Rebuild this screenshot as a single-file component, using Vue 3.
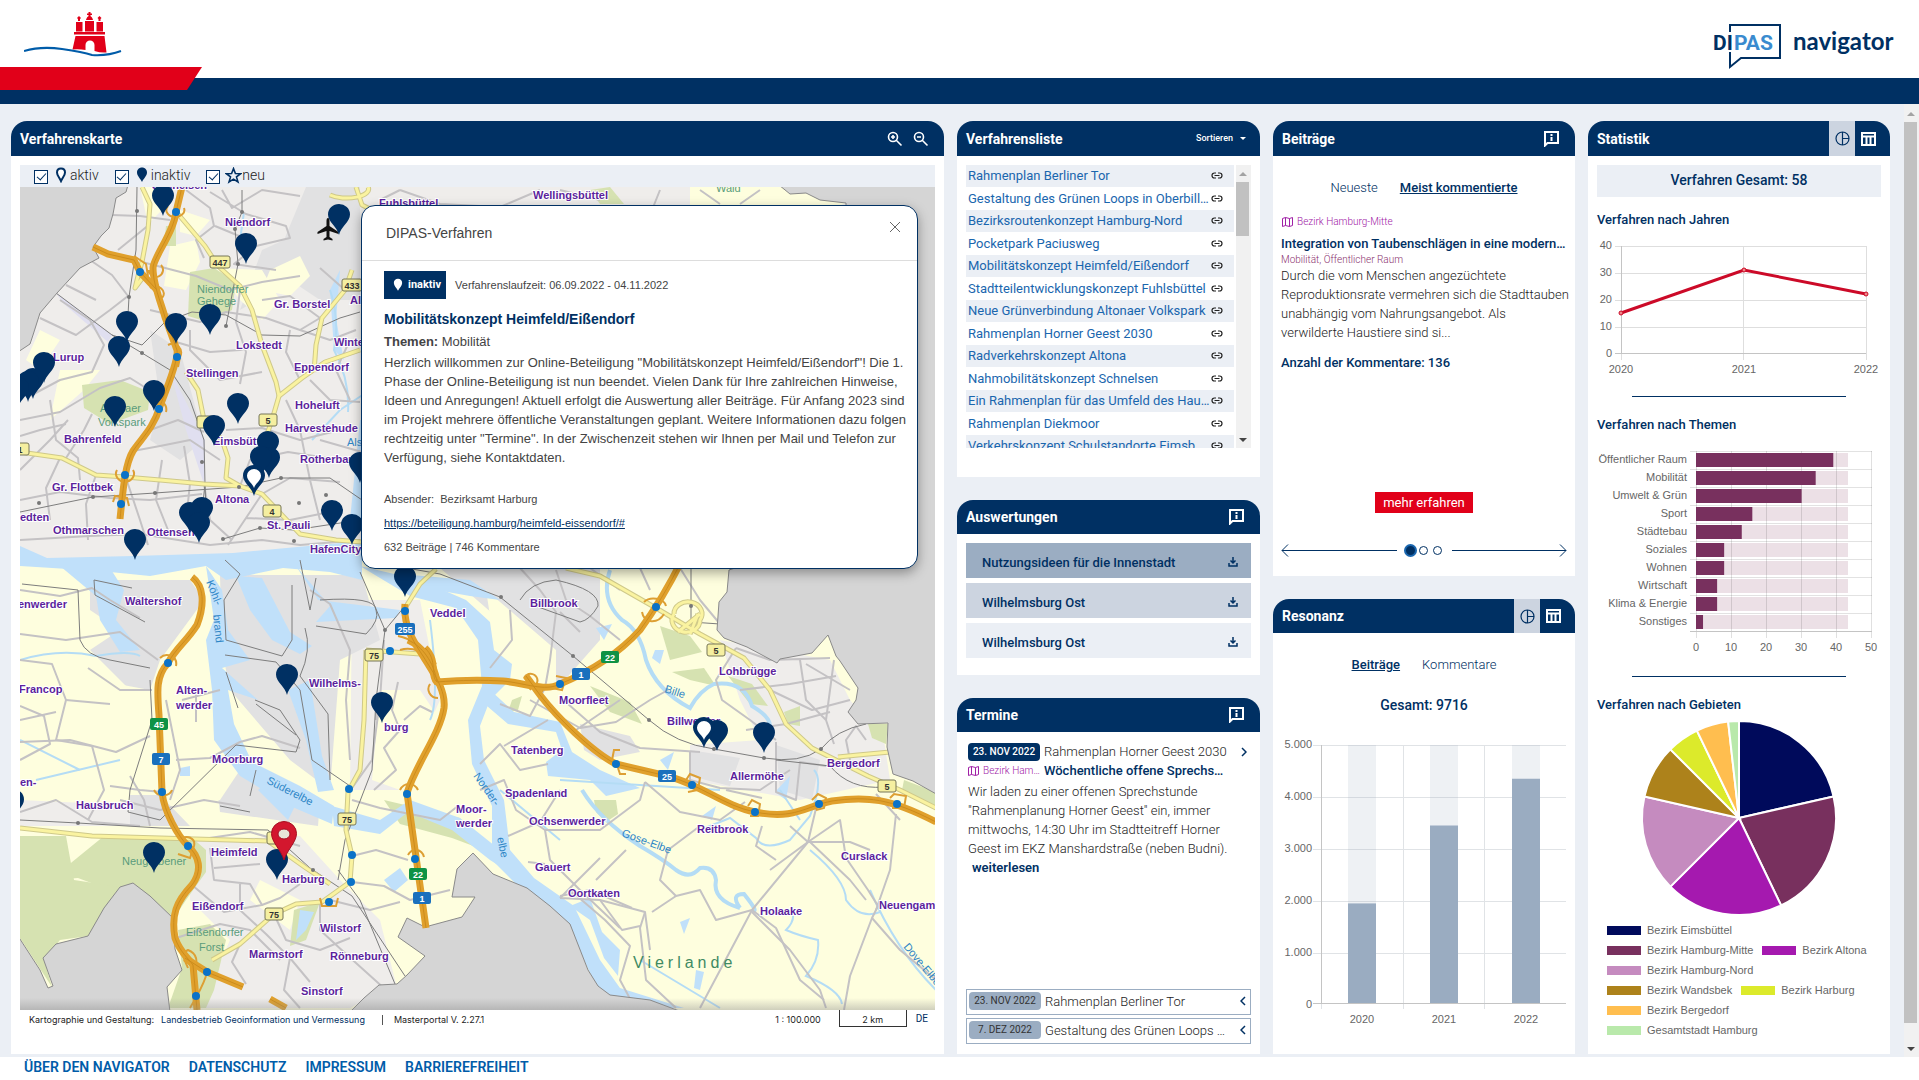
<script setup>
import { ref, computed } from 'vue'

const filters = ref({ aktiv: true, inaktiv: true, neu: true })

const procedures = [
  'Rahmenplan Berliner Tor',
  'Gestaltung des Grünen Loops in Oberbillwerder',
  'Bezirksroutenkonzept Hamburg-Nord',
  'Pocketpark Paciusweg',
  'Mobilitätskonzept Heimfeld/Eißendorf',
  'Stadtteilentwicklungskonzept Fuhlsbüttel',
  'Neue Grünverbindung Altonaer Volkspark',
  'Rahmenplan Horner Geest 2030',
  'Radverkehrskonzept Altona',
  'Nahmobilitätskonzept Schnelsen',
  'Ein Rahmenplan für das Umfeld des Hauptbahnhofs',
  'Rahmenplan Diekmoor',
  'Verkehrskonzept Schulstandorte Eimsbüttel',
]

const reports = ['Nutzungsideen für die Innenstadt', 'Wilhelmsburg Ost', 'Wilhelmsburg Ost']

const upcoming = [
  { date: '23. NOV 2022', title: 'Rahmenplan Berliner Tor' },
  { date: '7. DEZ 2022', title: 'Gestaltung des Grünen Loops in Oberbillwerder' },
]

const footerLinks = ['Über den Navigator', 'Datenschutz', 'Impressum', 'Barrierefreiheit']

const resonance = [
  { year: '2020', value: 1930 },
  { year: '2021', value: 3440 },
  { year: '2022', value: 4346 },
]
const resonanceTicks = ['5.000', '4.000', '3.000', '2.000', '1.000', '0']

const topics = [
  ['Öffentlicher Raum', 39], ['Mobilität', 34], ['Umwelt & Grün', 30], ['Sport', 16], ['Städtebau', 13],
  ['Soziales', 8], ['Wohnen', 8], ['Wirtschaft', 6], ['Klima & Energie', 6], ['Sonstiges', 2],
]

const districts = [
  { name: 'Bezirk Eimsbüttel', value: 12, color: '#000a5b' },
  { name: 'Bezirk Hamburg-Mitte', value: 12, color: '#78305e' },
  { name: 'Bezirk Altona', value: 11, color: '#a519af' },
  { name: 'Bezirk Hamburg-Nord', value: 9, color: '#c58bbf' },
  { name: 'Bezirk Wandsbek', value: 5, color: '#ad821b' },
  { name: 'Bezirk Harburg', value: 3, color: '#dcea2b' },
  { name: 'Bezirk Bergedorf', value: 3, color: '#ffbe4f' },
  { name: 'Gesamtstadt Hamburg', value: 1, color: '#b9e9ab' },
]
const slices = computed(() => {
  const total = districts.reduce((s, d) => s + d.value, 0)
  const r = 97
  let at = 0
  return districts.map((d) => {
    const a = (at / total) * 2 * Math.PI
    at += d.value
    const b = (at / total) * 2 * Math.PI
    const p = (t) => `${(r * Math.sin(t)).toFixed(2)} ${(-r * Math.cos(t)).toFixed(2)}`
    return { color: d.color, d: `M0 0L${p(a)}A${r} ${r} 0 0 1 ${p(b)}Z` }
  })
})

/* Map geometry */
const places = [
  ['Schnelsen', 152, 189], ['Wellingsbüttel', 533, 199], ['Fuhlsbüttel', 379, 207], ['Niendorf', 225, 226],
  ['Gr. Borstel', 274, 308], ['Lokstedt', 236, 349], ['Lurup', 53, 361], ['Winterhude', 334, 346], ['Alsterdorf', 350, 304],
  ['Stellingen', 186, 377], ['Eppendorf', 294, 371], ['Hoheluft', 295, 409], ['Harvestehude', 285, 432],
  ['Eimsbüttel', 213, 445], ['Rotherbaum', 300, 463], ['Bahrenfeld', 64, 443], ['Gr. Flottbek', 52, 491],
  ['Altona', 215, 503], ['St. Pauli', 267, 529], ['HafenCity', 310, 553], ['Othmarschen', 53, 534], ['Ottensen', 147, 536],
  ['edten', 20, 521], ['Waltershof', 125, 605], ['enwerder', 18, 608], ['Veddel', 430, 617], ['Francop', 19, 693],
  ['Alten-', 176, 694], ['werder', 176, 709], ['Wilhelms-', 309, 687], ['burg', 384, 731], ['Moorburg', 212, 763],
  ['en-', 20, 786], ['Hausbruch', 76, 809], ['Heimfeld', 211, 856], ['Harburg', 282, 883], ['Eißendorf', 192, 910],
  ['Wilstorf', 320, 932], ['Marmstorf', 249, 958], ['Rönneburg', 330, 960], ['Sinstorf', 301, 995],
  ['Billbrook', 530, 607], ['Moorfleet', 559, 704], ['Lohbrügge', 719, 675], ['Billwerder', 667, 725],
  ['Tatenberg', 511, 754], ['Allermöhe', 730, 780], ['Bergedorf', 827, 767], ['Spadenland', 505, 797],
  ['Ochsenwerder', 529, 825], ['Reitbrook', 697, 833], ['Curslack', 841, 860], ['Moor-', 456, 813], ['werder', 456, 827],
  ['Gauert', 535, 871], ['Oortkaten', 568, 897], ['Holaake', 760, 915], ['Neuengamme', 879, 909],
]
const woods = [
  ['Niendorfer', 197, 293], ['Gehege', 197, 305], ['Altonaer', 100, 412], ['Volkspark', 98, 426],
  ['Neugrabener', 122, 865], ['Eißendorfer', 186, 936], ['Forst', 199, 951], ['Wald', 716, 192],
]
const rivers = [
  ['Köhl-', 206, 582, 68], ['brand', 213, 615, 84], ['Süderelbe', 266, 783, 27], ['Norder-', 473, 776, 55],
  ['elbe', 497, 838, 78], ['Gose-Elbe', 621, 836, 20], ['Bille', 664, 692, 18], ['Dove-Elbe', 903, 947, 50], ['Alster', 347, 446, 0],
]
const shields = [
  ['447', 220, 262, 'y'], ['433', 352, 285, 'y'], ['', 206, 422, 'y'], ['5', 268, 420, 'y'], ['4', 272, 511, 'y'],
  ['75', 374, 655, 'y'], ['75', 347, 819, 'y'], ['75', 274, 914, 'y'], ['1', 20, 449, 'y'], ['', 276, 838, 'y'],
  ['5', 716, 650, 'y'], ['5', 887, 786, 'y'], ['255', 405, 629, 'b'], ['7', 161, 759, 'b'], ['1', 422, 898, 'b'],
  ['1', 581, 674, 'b'], ['25', 667, 776, 'b'], ['45', 159, 724, 'g'], ['22', 418, 874, 'g'], ['22', 610, 657, 'g'],
]
const pins = [
  [163, 214], [246, 262], [339, 233], [210, 333], [127, 340], [176, 342], [119, 365], [44, 381], [33, 397], [28, 400], [18, 406],
  [154, 409], [115, 425], [238, 422], [214, 444], [268, 460], [269, 476], [261, 475], [202, 526], [190, 531], [199, 541],
  [135, 558], [332, 529], [352, 543], [360, 481], [405, 595], [287, 693], [382, 721], [13, 818], [154, 871], [277, 878],
  [717, 749], [764, 751],
]
const openPins = [[254, 494], [704, 746]]
const junctions = [
  [176, 212], [140, 272], [177, 357], [159, 409], [125, 475], [121, 504], [168, 663], [162, 792], [188, 846], [207, 972],
  [196, 996], [405, 611], [390, 651], [349, 789], [352, 855], [351, 882], [329, 902], [407, 794], [415, 859],
  [560, 684], [656, 607], [616, 764], [692, 785], [755, 812], [819, 804], [897, 804],
]
const stations = [
  [137, 211], [242, 212], [235, 229], [238, 264], [129, 297], [226, 326], [142, 353], [202, 462], [239, 487], [281, 478],
  [155, 493], [39, 503], [93, 497], [299, 503], [326, 495], [294, 541], [260, 528], [223, 539], [500, 207], [385, 630],
  [573, 656], [649, 720], [714, 749], [764, 758], [821, 749], [313, 870], [691, 606], [501, 597], [78, 823],
]
const motorways = [
  'M182 187L176 212C174 232 153 258 153 268C153 284 160 300 165 317L177 350C179 360 163 398 160 406C154 428 140 440 133 451C125 464 123 490 120 519',
  'M93 247L108 254L134 260L140 272L157 290',
  'M192 577C204 586 205 604 197 625C186 642 176 648 168 663C156 676 157 690 159 715L162 792C164 812 178 836 188 846C199 856 203 870 192 885C176 902 171 915 175 938C180 952 188 958 193 965L197 1010',
  'M185 958L207 972L243 987M270 999L286 1008',
  'M405 604C403 628 416 645 423 656C434 674 446 690 444 708C440 734 416 764 407 793L426 928',
  'M408 640C422 646 434 662 437 682C460 680 485 680 503 681C525 683 545 692 560 684C594 670 620 652 640 630C656 608 668 588 682 560',
  'M425 648C438 660 430 676 437 682M526 676L540 695C556 716 592 752 616 764L667 776C700 784 724 806 755 812C795 820 806 806 832 801C866 796 890 798 936 822',
]
const ramps = [
  'M168 206a9 7 0 1 0 16 2M134 256l12 8 2 12M149 270a7 7 0 1 0 12-5M150 288c8-6 18 4 12 10M168 345c8-4 16 4 12 12l-2 10M152 400c8-2 16 4 14 12',
  'M117 470a9 8 0 1 0 16 0M113 502l2-6 12 2 2 8M160 658c6-6 18-2 16 8M154 790c4 8 16 6 18 0M180 840c6-6 16-2 14 6l-4 12-12-4',
  'M398 636c12 2 30 14 30 24M400 650c12-4 26 2 36 14M430 684c-4 6 0 14 8 14M400 790c4-8 14-8 18 0M408 855c4-8 14-6 16 2M320 898l2 8 14 0 2-8',
  'M524 678a7 7 0 1 1 11 8M530 690c4-8 14-6 12 2M556 676l10 2-4 12-10-2M644 602c6-6 20-4 22 4M642 612c2 12 16 12 22 2M612 760l2-10 6 0M618 768l2 6 6 0',
  'M686 780l4-6 10 4-2 12-10 2M748 806l4-6 8 4-2 12-8 0M812 800l6-6 8 4-2 10-8 2M890 798l4-4 12 2-2 12-12 0',
  'M188 968c-4-10-8-14 0-18 10 4 10 12 6 22M190 1008c6-10 12-20 16-32',
]
const yellowRoads = [
  'M142 187L150 204 148 230 142 262 138 276 135 288 144 276',
  'M178 214L205 246 218 266 240 286 252 310 262 345 276 382 279 396 302 378 325 362 360 350',
  'M279 396L272 420 265 440M186 372L198 390 204 420 222 440 228 458 226 478 240 486',
  'M20 452L62 458 96 475 125 477 160 480 204 484 240 486 262 494 300 534 336 540 362 542',
  'M352 270L345 290 322 318 316 345 314 372M330 195a22 9 0 0 0 38-8M356 187L362 205 378 213',
  'M436 569L420 584 405 608M366 650L420 654M366 650L364 720 360 770 348 792 346 830 352 856 350 882 322 902 296 904 274 914 240 944 212 960',
  'M20 828L92 836 160 838 268 841 306 868 330 884',
  'M566 568L600 576 656 608 700 634 744 658 770 690 786 724 812 748 836 760 868 776 900 790 936 808M838 757L858 755 890 752',
  'M674 614a14 12 0 1 0 26 6a14 12 0 1 0-26-6M678 632l22-18M690 634l8-20',
]
const greyRoads = [
  'M60 300L90 320 104 345 92 372 60 380 30 396M40 318L76 335 110 310 128 296M66 285L96 300M90 260L112 275 128 296M112 215L140 216 170 220M118 250L150 224',
  'M186 190L210 208 214 226 196 240 204 258M210 192L246 214 286 226 290 238 256 246 234 264 276 270M222 190L232 208 262 190 300 196M215 226L244 238',
  'M142 262L196 276 230 290 262 282 300 276M150 310L200 322 226 312 266 318 300 330 320 318M176 342L210 352 240 350 262 345M190 330L190 350 220 380 262 372',
  'M240 290L236 322 246 352 240 384M262 300L290 296 320 318M290 330L286 352 300 380M300 330L330 340 356 330M320 268L345 290',
  'M20 420L60 412 100 388 130 378 162 398M20 470L50 440 68 420M50 400L56 440 78 458 80 480M96 475L86 504 88 540M60 458L46 488 50 520M20 500L60 492 110 498 150 500 202 494',
  'M66 458L84 430 92 414M133 451L160 446 190 440 220 460M150 430L178 420 204 432M162 460L156 500 168 530M125 475L140 520 148 545M184 446L190 484 186 520M204 484L210 520 232 540',
  'M20 540L90 536 140 534 210 545 262 540 300 545 360 540M226 430L262 428 300 440 340 430M240 486L250 460 288 452 340 460M262 494L290 478 340 482M286 400L300 430 310 480 320 520',
  'M228 545L250 512 262 494M246 518L290 520 330 512M310 380L330 400 360 402M350 340L336 370 350 400M320 440L362 452M20 436L40 430 66 424',
  'M20 590L60 596 92 588 110 600 140 618M20 634L66 640 120 632 158 660M20 660L52 664 66 700 56 740 92 746M88 668L120 690 152 690M20 706L44 716 50 744 20 760',
  'M20 742L70 740 116 752 150 736M66 700L110 704M92 746L104 790 88 820M110 786L140 790 162 792M120 800L160 810 204 800 240 806M20 812L56 800 92 822 140 826',
  'M182 700L220 690M166 700L180 770 170 800M196 690L196 722M176 760L210 758 240 742 262 736 300 748M150 826L144 800 130 776',
  'M196 840L250 832 300 846M210 848L214 880 250 884 262 905 224 912 192 885M214 868L260 864M240 884L240 910 266 934 290 958 310 982M176 938L220 924 250 930 280 960',
  'M300 884L280 898 262 905M240 944L232 962 246 984M274 914L286 940 320 950 350 938M320 902L320 930 346 954 386 990M330 900L370 910 400 902M290 958L284 990 300 1008',
  'M310 590L330 604 350 650 346 700 350 760M384 640L380 700 372 760 352 788M398 682L392 710 400 730 384 748 396 770 374 790M404 720L420 706 432 712M352 800L380 808 400 812',
  'M352 856L376 850 408 860M352 882L384 886 410 900 450 890M400 812L440 820 458 806M376 700L376 720M20 720L56 712',
  'M520 568L540 590 556 612 550 660 545 688M510 610L512 640 490 668M556 570L566 600 590 616 620 640M590 568L620 590M640 568L650 590M680 568L700 600 720 624',
  'M580 632L560 612M545 688L530 716 500 704M530 700L580 728 616 722 650 700 668 690M568 704L600 732 640 748 700 752M576 730L620 700',
  'M736 648L770 660 830 658M736 648L716 680 722 700 750 720 776 740M740 690L790 684 836 676M800 660L806 700 826 720 834 744M770 690L812 710 850 700M834 660L826 720M786 724L830 712M806 664L850 690',
  'M690 752L690 780 720 788 760 790 790 770M776 742L776 792 796 800 800 762 826 766M746 730L786 724M726 790L762 798M850 760L846 740 856 726 866 740',
  'M504 746L548 720M480 764L500 744 520 770 548 764M480 790L504 780 516 810 545 830 600 830 640 800 645 782M545 830L550 860 580 890 620 928M508 836L540 822 560 790',
  'M645 782L680 812 720 820 745 802M700 826L668 850 660 880 676 896 700 890 716 920 752 910 808 842M600 858L560 898M626 850L596 880M545 864L528 862M560 898L600 900 645 912 650 950',
  'M645 912L640 928 646 980 676 1008M560 896L590 890 632 908M676 896L652 912M808 842L840 820 846 858 868 890 878 906 872 918 850 976 844 1010M752 910L700 1008',
  'M808 842L818 800M896 814L890 870 876 910M810 842L850 880 866 900M752 912L790 950 820 990 826 1008M872 918L900 950 936 980M770 870L808 842M876 794L900 820',
  'M762 826L756 846 776 860M790 826L808 842 850 842 870 850M600 900L622 930 640 926M570 890L605 920 630 946 620 980 636 1010M752 910L776 928 800 980 824 1000',
  'M640 240L660 190M700 190L720 204M560 190L600 200M400 190L440 204 500 207 540 190M760 190L740 204M400 190L380 200',
]
const rails = [
  'M137 187L136 250 129 297 128 315M56 293L112 335 142 353 170 370 190 400 204 440 205 484 200 530M112 335L142 345 165 322 192 312 226 315 262 335 300 336 340 318 360 312',
  'M20 512L93 497 155 493 239 487 281 478 330 478 362 500M205 484L206 510M223 539L260 528 294 530 360 520M242 190L242 212 235 229 238 264 226 326',
  'M360 572L385 630 410 600M385 630L376 700 372 770 345 840 338 880M20 820L78 823 160 828 268 830 310 868 352 896 405 976M338 870L360 900 395 984',
  'M362 560L440 574 500 597 573 656 649 720Q676 744 714 749L764 758Q800 764 821 749Q836 730 866 724M776 760L830 766Q850 790 884 787',
  'M691 568V622L720 624M520 600Q530 582 556 580Q600 590 598 606Q590 620 580 622L530 604',
  'M95 595L94 580 132 588M95 595L145 622M22 584L78 590 80 640Q86 656 110 660L150 668M150 680L152 720 130 790 128 812 160 820 236 745 296 752 300 740 280 710 255 700',
  'M225 560L240 574 224 600 226 640 282 656 292 640 292 585M316 578L310 610 300 560M320 600Q376 596 376 610Q380 620 366 634L316 626M225 655L276 662 300 690 312 760 350 786M226 672L238 708M256 704L296 735',
  'M305 628Q312 650 300 676L328 714 330 780M250 796L256 770M220 806L250 812',
]
const streams = [
  'M20 660Q60 648 96 656Q130 650 140 656M330 290Q340 320 334 350Q350 380 348 412M370 390L340 410 312 440M244 212L240 240',
  'M610 570Q600 600 622 620Q640 630 646 660Q656 690 690 708Q700 690 714 684Q744 680 752 706Q776 720 768 732',
  'M582 790Q600 820 640 846Q664 860 676 870Q690 880 700 868Q714 866 716 880Q712 900 740 908M740 908Q730 894 744 894Q760 914 752 910',
  'M792 910Q796 920 786 930Q800 936 818 940Q820 960 806 976Q840 990 842 1004M870 890Q896 950 936 990M700 830L730 818 756 838Q764 852 790 840L810 816Q824 780 814 770',
  'M810 850Q846 880 846 900Q860 920 880 912M20 740L80 770M36 780L120 760M640 960L720 1008M560 780L720 790M500 790L560 840M780 790L800 820M430 620Q440 700 430 720',
]
const forests = [
  '190,272 214,268 236,282 232,310 208,322 188,316', '82,385 120,380 150,392 148,410 110,424 84,408', '166,226 176,226 176,246 164,246',
  '104,836 190,836 206,850 206,872 186,900 174,918 133,883 110,890 78,878 50,880',
  '20,836 66,836 74,880 120,887 88,936 60,940 44,960 52,987 20,938', '178,930 210,924 226,940 214,990 206,1008 168,1008 182,968',
  '660,626 690,636 702,652 670,660', '672,672 704,668 716,686 690,680', '590,686 630,702 642,724 610,712', '594,800 616,800 618,814 606,822 596,812',
  '868,724 888,724 886,744 872,738', '904,780 936,792 936,806 902,790', '384,800 460,818 484,850 452,838 400,824', '590,190 610,187 624,204 600,204',
  '728,676 752,684 768,706 750,704', '784,712 800,706 800,726 788,724', '512,700 522,696 518,710 508,712', '294,910 320,902 306,940 290,946',
]
</script>

<template>
  <div class="page">
    <header class="top">
      <div class="brand">
        <svg class="hh-logo" width="98" height="52" viewBox="0 0 98 52" role="img" aria-label="Hamburg">
          <g fill="#e10019">
            <path d="M51.500 24h29l2 16.500q-6 .5-12-1.500v-6a4.500 4.500 0 0 0-9 0v5q-6-1-13-.5z" />
            <path d="M50 20h31v2.500H50z" />
            <path d="M52 10h6.500v9.500H52zM72.500 10H79v9.500h-6.500zM61 9h9v10.500h-9zM62 8q1-4 3.500-4T69 8zM64.500 0h2v1.500H68v1.500h-1.500V5h-2V3H63V1.500h1.500z" />
            <path d="M54 9V7l-1-1 2-2 2 2-1 1v2zM74.500 9V7l-1-1 2-2 2 2-1 1v2z" />
          </g>
          <path d="M0 39Q17 34 38 37T68 43Q84 44 97 39" fill="none" stroke="#005ca9" stroke-width="2" />
        </svg>
        <svg class="dipas" width="182" height="52" viewBox="0 0 182 52" role="img" aria-label="DIPAS navigator">
          <path d="M17 9V2H67V35H28L17 44V29" fill="none" stroke="#003063" stroke-width="2" />
          <text x="0" y="27" class="d1">DI</text>
          <text x="21" y="27" class="d2">PAS</text>
          <text x="80" y="27" class="d3">navigator</text>
        </svg>
      </div>
      <div class="bar"></div>
      <div class="ribbon"></div>
    </header>

    <div class="scroller">
      <main class="board">
        <section class="card map-card">
          <div class="head">
            <h2>Verfahrenskarte</h2>
            <button class="icon" aria-label="Vergrößern">
              <svg width="18" height="18" viewBox="0 0 18 18"><path d="M7 2.500a4.500 4.500 0 1 0 0 9 4.500 4.500 0 0 0 0-9zM10.500 10.500l5 5M7 5v4M5 7h4" fill="none" stroke="currentColor" stroke-width="1.600" /></svg>
            </button>
            <button class="icon" aria-label="Verkleinern">
              <svg width="18" height="18" viewBox="0 0 18 18"><path d="M7 2.500a4.500 4.500 0 1 0 0 9 4.500 4.500 0 0 0 0-9zM10.500 10.500l5 5M5 7h4" fill="none" stroke="currentColor" stroke-width="1.600" /></svg>
            </button>
          </div>
          <div class="legend">
            <label><input v-model="filters.aktiv" type="checkbox" />
              <svg width="12" height="16" viewBox="0 0 12 16"><path d="M6 1.500C3.500 1.500 2 3.300 2 5.500 2 8.500 4.500 10.500 6 14c1.500-3.500 4-5.500 4-8.500 0-2.200-1.500-4-4-4z" fill="#fff" stroke="#003063" stroke-width="2" /></svg>
              <span>aktiv</span></label>
            <label><input v-model="filters.inaktiv" type="checkbox" />
              <svg width="12" height="16" viewBox="0 0 12 16"><path d="M6 .5C3 .5 1 2.800 1 5.500 1 9 4.500 11.500 6 15c1.500-3.500 5-6 5-9.500C11 2.800 9 .5 6 .5z" fill="#003063" /></svg>
              <span>inaktiv</span></label>
            <label><input v-model="filters.neu" type="checkbox" />
              <svg class="star" width="17" height="17" viewBox="0 0 16 16"><path d="M8 1.500l1.800 4.600 4.900.2-3.900 3 1.400 4.800L8 11.400l-4.200 2.700 1.400-4.800-3.900-3 4.900-.2z" fill="none" stroke="#003063" stroke-width="1.500" /></svg>
              <span>neu</span></label>
          </div>

          <div class="map">
            <svg class="tiles" viewBox="20 187 916 823" preserveAspectRatio="xMinYMin slice">
              <defs>
                <linearGradient id="fade" x1="0" y1="0" x2="0" y2="1"><stop offset="0" stop-color="#888" stop-opacity="0" /><stop offset="1" stop-color="#888" stop-opacity=".4" /></linearGradient>
                <path id="pin" d="M0 2C-1.500-6-11-11-11-18.500A11 10.500 0 0 1 11-18.500C11-11 1.500-6 0 2z" />
              </defs>
              <rect x="20" y="187" width="916" height="823" fill="#fefede" />
              <!-- built-up areas -->
              <g fill="#efedeb">
                <path d="M20 187H936V560H20z" />
                <path d="M352 600H420L440 700 400 790 350 790zM190 840L300 836 340 880 380 920 396 984 350 1008H200L230 940 190 900zM720 640L830 660 850 700 884 740 890 780 800 800 690 780 690 745 760 740 740 700zM20 800L150 806 160 826 20 826z" />
              </g>
              <g fill="#e1e1e2">
                <path d="M240 310L262 250 284 240 306 187H360V300L320 300 290 280z" />
                <path d="M90 580L190 580 204 600 160 660 150 690 96 680 90 650 120 630 90 610z" />
                <path d="M220 575L362 575 380 640 340 660 330 790 290 760 230 690 222 650z" />
                <path d="M230 760L320 800 318 826 220 812 216 780zM130 795L160 795 190 826H130z" />
                <path d="M440 568H600L600 640 556 690 500 620zM580 724L630 736 640 752 600 760 584 750zM776 745L820 760 812 800 780 790zM690 750L740 758 730 786 690 776z" />
                <path d="M150 330L180 350 204 440 180 460 150 440 160 400z" />
              </g>
              <g fill="#fefede">
                <path d="M170 246L196 240 200 262 186 290 164 286zM270 270L300 256 310 276 290 296 262 290zM140 187L160 187 162 210 148 224zM216 268L262 270 280 300 262 320 240 300zM60 370L100 370 84 390 50 420zM180 210L210 220 196 236 180 232zM40 330L60 340 40 370 26 360z" />
                <path d="M20 640L90 650 130 690 150 720 150 790 20 790zM170 740L212 740 240 770 220 800 172 800zM260 880L300 900 290 930 250 900z" />
                <path d="M690 187L780 187 846 203 780 230 690 230z" />
                <path d="M380 690L420 690 440 720 400 790 372 780zM486 590L556 650 556 690 500 680z" />
              </g>
              <polygon v-for="(f, i) in forests" :key="'f' + i" :points="f" fill="#d6e2b1" />
              <!-- water -->
              <g fill="#c0e0fa">
                <path d="M20 546L47 558 133 556 233 553 362 541V580L330 572 283 568 226 580 206 566 150 576 100 571 20 566z" />
                <path d="M60 566L110 568 124 590 116 620 140 650 120 652 100 620 96 596z" />
                <path d="M206 566L222 590 228 630 250 660 222 668 258 700 228 690 234 724 252 762 300 786 334 806 332 824 290 806 240 776 214 740 212 690 206 640 214 620z" />
                <path d="M236 576L262 578 290 632 312 646 300 654 272 640 250 610zM296 566L318 600 400 610 396 618 316 622 330 606zM400 574L470 580 500 600 470 596 436 590z" />
                <path d="M288 690L310 680 322 756 334 790 318 792 306 740zM258 790L270 780 296 804 288 820z" />
                <path d="M360 566L420 580 466 600 490 622 494 650 512 664 510 680 490 700 480 726 484 760 504 800 510 850 534 878 574 906 600 960 620 988 684 1008H640L600 994 584 960 560 920 522 890 492 860 492 806 472 764 468 720 482 686 478 640 456 608 410 596z" />
                <path d="M332 806L380 820 410 800 460 818 500 850 512 874 490 860 452 830 408 812 380 834 334 826z" />
                <path d="M490 690L514 712 560 722 572 752 600 770 640 788 606 796 590 780 548 776 546 762 562 750 556 732 508 724 480 700z" />
                <path d="M570 906L590 898 602 932 620 950 618 976 604 958 590 920zM384 880L400 868 408 880 394 892zM300 910L314 912 306 930 296 940zM696 970L704 972 700 990 694 988zM680 922L690 918 684 934zM596 628L612 624 604 640zM655 650L664 650 660 664 652 658zM180 768L190 766 190 776 180 776zM775 792L790 776 786 800zM702 816L716 806 712 820zM660 760L674 752 668 770zM360 420H372V520H350z" />
                <path d="M330 290L340 270 336 320 344 360 334 350z" />
              </g>
              <g fill="none" stroke="#b4dcf5"><path v-for="(s, i) in streams" :key="'s' + i" :d="s" :stroke-width="i === 1 || i === 2 ? 4 : 2" /></g>
              <path d="M56 293L112 335 108 342 64 304zM170 370L205 440 204 484 186 430z" fill="#e0dff0" />
              <!-- roads -->
              <g fill="none" stroke="#c4c2c4" stroke-width="2" stroke-linejoin="round"><path v-for="(r, i) in greyRoads" :key="'g' + i" :d="r" /></g>
              <g fill="none" stroke="#7d7d7d" stroke-width="1"><path v-for="(r, i) in rails" :key="'r' + i" :d="r" /></g>
              <g fill="none" stroke="#cfc98a" stroke-width="5" stroke-linejoin="round"><path v-for="(r, i) in yellowRoads" :key="'yc' + i" :d="r" /></g>
              <g fill="none" stroke="#faf3a0" stroke-width="3" stroke-linejoin="round"><path v-for="(r, i) in yellowRoads" :key="'y' + i" :d="r" /></g>
              <!-- area beyond the city border -->
              <g fill="#d5d5d5" stroke="#8a8a8a" stroke-width="1">
                <path d="M18 185H128L126 192 116 198 113 214 109 228 101 236 93 247 99 258 80 268 57 293 40 313 33 335 30 344 18 352z" />
                <path d="M938 185H779L790 194 806 193 820 200 846 203V400L760 560 729 570 727 592 719 602 717 630 724 638 747 647 777 663 780 659 812 653 828 635 836 656 840 661 858 688 856 700 848 712 858 724 888 723 887 747 893 774 913 781 938 795z" />
                <path d="M473 853L493 874 527 888 550 906 570 924 588 970 598 986 610 995 650 1000 682 1012H350L364 998 379 985 397 984 407 975 425 956 398 937 407 918 425 927 462 917 475 897 452 897 457 869z" />
                <path d="M18 936L40 970 48 988 53 986 43 958 56 944 88 936 104 908 120 887 133 883 150 896 173 918 175 949 182 970 167 987 170 1012H18z" />
              </g>
              <g fill="none" stroke="#dd9f33" stroke-width="2"><path v-for="(r, i) in ramps" :key="'rp' + i" :d="r" /></g>
              <g fill="none" stroke="#e0a02c" stroke-width="7" stroke-linejoin="round"><path v-for="(r, i) in motorways" :key="'m' + i" :d="r" /></g>
              <g fill="none" stroke="#cc8c1c" stroke-width="1"><path v-for="(r, i) in motorways" :key="'mc' + i" :d="r" /></g>
              <circle v-for="(c, i) in stations" :key="'st' + i" :cx="c[0]" :cy="c[1]" r="2" fill="#777" />
              <circle v-for="(c, i) in junctions" :key="'j' + i" :cx="c[0]" :cy="c[1]" r="4" fill="#0a72c8" />
              <!-- road numbers -->
              <g v-for="(s, i) in shields" :key="'sh' + i" :transform="`translate(${s[1]} ${s[2]})`" :class="['shield', s[3]]">
                <rect :x="s[0].length > 2 ? -10 : -9" y="-6" :width="s[0].length > 2 ? 20 : 18" height="12" rx="2" />
                <text y="4">{{ s[0] }}</text>
              </g>
              <!-- names -->
              <text v-for="(w, i) in woods" :key="'w' + i" :x="w[1]" :y="w[2]" class="wood">{{ w[0] }}</text>
              <text x="633" y="968" class="region">Vierlande</text>
              <text v-for="(w, i) in rivers" :key="'ri' + i" :transform="`translate(${w[1]} ${w[2]}) rotate(${w[3]})`" class="river">{{ w[0] }}</text>
              <text v-for="(p, i) in places" :key="'p' + i" :x="p[1]" :y="p[2]" class="place">{{ p[0] }}</text>
              <!-- airport -->
              <path d="M328 218q1.500 0 1.500 3v5l9 6v2l-9-3v6l3 2v1.500l-4.500-1-4.500 1V239l3-2v-6l-9 3v-2l9-6v-5q0-3 1.500-3z" fill="#111" />
              <!-- procedures -->
              <use v-for="(p, i) in pins" :key="'pin' + i" href="#pin" :x="p[0]" :y="p[1]" fill="#003063" />
              <g v-for="(p, i) in openPins" :key="'op' + i" :transform="`translate(${p[0]} ${p[1]})`">
                <use href="#pin" fill="#003063" />
                <path d="M0-6C-1.500-11-7-13-7-18.500A7 6.500 0 0 1 7-18.500C7-13 1.500-11 0-6z" fill="#fff" />
              </g>
              <g transform="translate(284 860)">
                <path d="M0 0C-3-10-12.500-18-12.500-26.500A12.500 12 0 0 1 12.500-26.500C12.500-18 3-10 0 0z" fill="#d3172e" stroke="#a50f22" />
                <ellipse cx="0" cy="-26" rx="6" ry="5" fill="#e7e5d8" stroke="#a50f22" />
              </g>
              <rect x="20" y="998" width="916" height="12" fill="url(#fade)" />
            </svg>

            <article class="popup">
              <div class="popup-head">
                <span>DIPAS-Verfahren</span>
                <button aria-label="Schließen"><svg width="12" height="12" viewBox="0 0 12 12"><path d="M1 1l10 10M11 1L1 11" stroke="#666" stroke-width="1" /></svg></button>
              </div>
              <div class="popup-body">
                <div class="status">
                  <span class="tag"><svg width="10" height="14" viewBox="0 0 12 16"><path d="M6 .5C3 .5 1 2.800 1 5.500 1 9 4.500 11.500 6 15c1.500-3.500 5-6 5-9.500C11 2.800 9 .5 6 .5z" fill="#fff" /></svg>inaktiv</span>
                  <span class="small">Verfahrenslaufzeit: 06.09.2022 - 04.11.2022</span>
                </div>
                <h3>Mobilitätskonzept Heimfeld/Eißendorf</h3>
                <p class="topic"><b>Themen:</b> Mobilität</p>
                <p>Herzlich willkommen zur Online-Beteiligung "Mobilitätskonzept Heimfeld/Eißendorf"! Die 1. Phase der Online-Beteiligung ist nun beendet. Vielen Dank für Ihre zahlreichen Hinweise, Ideen und Anregungen! Aktuell erfolgt die Auswertung aller Beiträge. Für Anfang 2023 sind im Projekt mehrere öffentliche Veranstaltungen geplant. Weitere Informationen dazu folgen rechtzeitig unter "Termine". In der Zwischenzeit stehen wir Ihnen per Mail und Telefon zur Verfügung, siehe Kontaktdaten.</p>
                <div class="meta small">
                  <span>Absender: &nbsp;Bezirksamt Harburg</span>
                  <a href="#">https://beteiligung.hamburg/heimfeld-eissendorf/#</a>
                  <span>632 Beiträge | 746 Kommentare</span>
                </div>
              </div>
            </article>
          </div>

          <div class="map-foot">
            <span>Kartographie und Gestaltung:</span>
            <a href="#">Landesbetrieb Geoinformation und Vermessung</a>
            <i></i>
            <span>Masterportal V. 2.27.1</span>
            <span class="scale">1 : 100.000</span>
            <span class="ruler">2 km</span>
            <a href="#" class="lang">DE</a>
          </div>
        </section>

        <div class="stack">
          <section class="card">
            <div class="head">
              <h2>Verfahrensliste</h2>
              <button class="sort">Sortieren <i></i></button>
            </div>
            <div class="list">
              <ul>
                <li v-for="p in procedures" :key="p">
                  <a href="#">{{ p }}</a>
                  <svg width="12" height="7" viewBox="0 0 12 7"><path d="M5 1H3.500a2.500 2.500 0 0 0 0 5H5M7 1h1.500a2.500 2.500 0 0 1 0 5H7M3.500 3.500h5" fill="none" stroke="#222" stroke-width="1.200" /></svg>
                </li>
              </ul>
              <div class="rail small-rail"><i class="up"></i><b></b><i class="down"></i></div>
            </div>
          </section>

          <section class="card">
            <div class="head">
              <h2>Auswertungen</h2>
              <button class="icon info" aria-label="Information"><svg width="15" height="16" viewBox="0 0 15 16"><path d="M1 14.500V1h13v11H3.500z" fill="none" stroke="currentColor" stroke-width="2" /><path d="M6.500 3h2v2h-2zM6.500 6h2v4h-2z" fill="currentColor" /></svg></button>
            </div>
            <div class="reports">
              <a v-for="(r, i) in reports" :key="i" href="#" :class="'tone' + i"><span>{{ r }}</span>
                <svg width="10" height="10" viewBox="0 0 10 10"><path d="M5 0v5M2.500 3.500L5 6l2.500-2.500M1 6v3h8V6" fill="none" stroke="currentColor" stroke-width="1.500" /></svg></a>
            </div>
          </section>

          <section class="card grow">
            <div class="head">
              <h2>Termine</h2>
              <button class="icon info" aria-label="Information"><svg width="15" height="16" viewBox="0 0 15 16"><path d="M1 14.500V1h13v11H3.500z" fill="none" stroke="currentColor" stroke-width="2" /><path d="M6.500 3h2v2h-2zM6.500 6h2v4h-2z" fill="currentColor" /></svg></button>
            </div>
            <div class="dates">
              <div class="date-row">
                <span class="date">23. NOV 2022</span><span class="ellip">Rahmenplan Horner Geest 2030</span>
                <button class="chev" aria-label="Zuklappen"><svg width="6" height="10" viewBox="0 0 6 10"><path d="M1 1l4 4-4 4" fill="none" stroke="#003063" stroke-width="1.500" /></svg></button>
              </div>
              <div class="date-row second">
                <span class="area"><svg width="11" height="10" viewBox="0 0 11 10"><path d="M.5 1.500L3.500.5v8l-3 1zM3.500.5l4 1v8l-4-1M7.500 1.500l3-1v8l-3 1" fill="none" stroke="currentColor" /></svg><span>Bezirk Hamburg-Mitte</span></span>
                <b class="ellip strong">Wöchentliche offene Sprechstunde</b>
              </div>
              <p>Wir laden zu einer offenen Sprechstunde "Rahmenplanung Horner Geest" ein, immer mittwochs, 14:30 Uhr im Stadtteitreff Horner Geest im EKZ Manshardstraße (neben Budni). <a href="#" class="more">weiterlesen</a></p>
              <div class="later">
                <div v-for="u in upcoming" :key="u.title" class="date-row boxed">
                  <span class="date pale">{{ u.date }}</span><span class="ellip">{{ u.title }}</span>
                  <button class="chev" aria-label="Aufklappen"><svg width="6" height="10" viewBox="0 0 6 10"><path d="M5 1L1 5l4 4" fill="none" stroke="#003063" stroke-width="1.500" /></svg></button>
                </div>
              </div>
            </div>
          </section>
        </div>

        <div class="stack">
          <section class="card even">
            <div class="head">
              <h2>Beiträge</h2>
              <button class="icon info" aria-label="Information"><svg width="15" height="16" viewBox="0 0 15 16"><path d="M1 14.500V1h13v11H3.500z" fill="none" stroke="currentColor" stroke-width="2" /><path d="M6.500 3h2v2h-2zM6.500 6h2v4h-2z" fill="currentColor" /></svg></button>
            </div>
            <div class="post">
              <nav class="tabs"><button>Neueste</button><button class="on">Meist kommentierte</button></nav>
              <span class="area"><svg width="11" height="10" viewBox="0 0 11 10"><path d="M.5 1.500L3.500.5v8l-3 1zM3.500.5l4 1v8l-4-1M7.500 1.500l3-1v8l-3 1" fill="none" stroke="currentColor" /></svg><span>Bezirk Hamburg-Mitte</span></span>
              <b class="ellip strong title">Integration von Taubenschlägen in eine moderne Stadt</b>
              <span class="themes">Mobilität, Öffentlicher Raum</span>
              <p>Durch die vom Menschen angezüchtete Reproduktionsrate vermehren sich die Stadttauben unabhängig vom Nahrungsangebot. Als verwilderte Haustiere sind si...</p>
              <b class="strong count">Anzahl der Kommentare: 136</b>
              <button class="cta">mehr erfahren</button>
              <div class="slider">
                <button class="prev" aria-label="Zurück"><svg width="8" height="13" viewBox="0 0 8 13"><path d="M7 .5L1 6.500l6 6" fill="none" stroke="#003063" /></svg></button>
                <button class="dot on" aria-label="1"></button><button class="dot" aria-label="2"></button><button class="dot" aria-label="3"></button>
                <button class="next" aria-label="Weiter"><svg width="8" height="13" viewBox="0 0 8 13"><path d="M1 .5l6 6-6 6" fill="none" stroke="#003063" /></svg></button>
              </div>
            </div>
          </section>

          <section class="card even">
            <div class="head split">
              <h2>Resonanz</h2>
              <button class="icon mode on" aria-label="Diagramm"><svg width="15" height="15" viewBox="0 0 15 15"><path d="M7.500 1a6.500 6.500 0 1 0 0 13 6.500 6.500 0 0 0 0-13zM7.500 1v13M7.500 7.500H14" fill="none" stroke="currentColor" stroke-width="1.200" /></svg></button>
              <button class="icon mode" aria-label="Tabelle"><svg width="15" height="14" viewBox="0 0 15 14"><path d="M1 1h13v12H1zM1 4.500h13M5.500 4.500V13M9.500 4.500V13" fill="none" stroke="currentColor" stroke-width="2" /></svg></button>
            </div>
            <div class="post">
              <nav class="tabs low"><button class="on">Beiträge</button><button>Kommentare</button></nav>
              <b class="total">Gesamt: 9716</b>
              <svg class="chart bars" viewBox="1272 730 302 300" role="img" aria-label="Beiträge pro Jahr">
                <g stroke="#e0e3e6">
                  <path v-for="i in 5" :key="i" :d="`M1312 ${693.500 + i * 52}H1565`" />
                  <path d="M1402.500 745V1009M1483.500 745V1009M1320.500 1003V1009" />
                </g>
                <path d="M1320.500 745V1003.500M1312 1003.500H1565" stroke="#c4c4c4" fill="none" />
                <g v-for="(b, i) in resonance" :key="b.year">
                  <rect :x="1347 + i * 82" y="745" width="28" height="258" fill="#9aacbf" opacity=".17" />
                  <rect :x="1347 + i * 82" :y="1003 - b.value * 0.0516" width="28" :height="b.value * 0.0516" fill="#9aacc1" />
                  <text :x="1361 + i * 82" y="1023" text-anchor="middle">{{ b.year }}</text>
                </g>
                <text v-for="(t, i) in resonanceTicks" :key="t" x="1311" :y="748 + i * 52" text-anchor="end">{{ t }}</text>
              </svg>
            </div>
          </section>
        </div>

        <section class="card stats">
          <div class="head split">
            <h2>Statistik</h2>
            <button class="icon mode on" aria-label="Diagramm"><svg width="15" height="15" viewBox="0 0 15 15"><path d="M7.500 1a6.500 6.500 0 1 0 0 13 6.500 6.500 0 0 0 0-13zM7.500 1v13M7.500 7.500H14" fill="none" stroke="currentColor" stroke-width="1.200" /></svg></button>
            <button class="icon mode" aria-label="Tabelle"><svg width="15" height="14" viewBox="0 0 15 14"><path d="M1 1h13v12H1zM1 4.500h13M5.500 4.500V13M9.500 4.500V13" fill="none" stroke="currentColor" stroke-width="2" /></svg></button>
          </div>
          <div class="stat-body">
            <div class="sum">Verfahren Gesamt: 58</div>
            <h3>Verfahren nach Jahren</h3>
            <svg class="chart" viewBox="1597 236 284 144" role="img" aria-label="Verfahren nach Jahren">
              <path v-for="i in 4" :key="i" :d="`M1615 ${219.500 + i * 27}H1866`" stroke="#dedede" />
              <path d="M1743.500 246V360M1866.500 246V360M1621.500 353V360" stroke="#dedede" />
              <path d="M1621.500 246V353.500M1615 353.500H1866" stroke="#c4c4c4" fill="none" />
              <path d="M1621 313L1744 270 1866 294" fill="none" stroke="#cc0a28" stroke-width="3" />
              <g fill="#e88" stroke="#cc0a28"><circle cx="1621" cy="313" r="2" /><circle cx="1744" cy="270" r="2" /><circle cx="1866" cy="294" r="2" /></g>
              <text v-for="(t, i) in [40, 30, 20, 10, 0]" :key="t" x="1612" :y="249 + i * 27" text-anchor="end">{{ t }}</text>
              <text x="1621" y="373" text-anchor="middle">2020</text><text x="1744" y="373" text-anchor="middle">2021</text><text x="1866" y="373" text-anchor="middle">2022</text>
            </svg>
            <hr />
            <h3>Verfahren nach Themen</h3>
            <svg class="chart spaced" viewBox="1597 440 284 220" role="img" aria-label="Verfahren nach Themen">
              <g v-for="(t, i) in topics" :key="t[0]">
                <path :d="`M1690 ${451.500 + i * 18}H1872`" stroke="#e2e2e2" />
                <rect x="1696" :y="453 + i * 18" width="152" height="14" fill="#ece0e6" />
                <text x="1687" :y="463 + i * 18" text-anchor="end">{{ t[0] }}</text>
              </g>
              <path v-for="i in 6" :key="i" :d="`M${1661 + i * 35}.5 451V638`" stroke="#555" stroke-opacity=".18" />
              <path d="M1690 631.500H1872" stroke="#c4c4c4" />
              <rect v-for="(t, i) in topics" :key="t[0]" x="1696" :y="453 + i * 18" :width="t[1] * 3.520" height="14" fill="#78305e" />
              <text v-for="i in 6" :key="'x' + i" :x="1661 + i * 35" y="651" text-anchor="middle">{{ i * 10 - 10 }}</text>
            </svg>
            <hr />
            <h3>Verfahren nach Gebieten</h3>
            <svg class="chart spaced" viewBox="-142 -98 284 196" role="img" aria-label="Verfahren nach Gebieten">
              <path v-for="s in slices" :key="s.color" :d="s.d" :fill="s.color" stroke="#fff" stroke-width="2" />
            </svg>
            <ul class="keys">
              <li v-for="d in districts" :key="d.name"><i :style="{ background: d.color }"></i>{{ d.name }}</li>
            </ul>
          </div>
        </section>
      </main>
      <div class="rail"><i class="up"></i><b></b><i class="down"></i></div>
    </div>

    <footer><a v-for="l in footerLinks" :key="l" href="#">{{ l }}</a></footer>
  </div>
</template>

<style>
body { margin: 0; }
</style>

<style scoped>
* { box-sizing: border-box; }
.page { min-height: 100vh; display: flex; flex-direction: column; font: 13px/19px Roboto, "Liberation Sans", sans-serif; color: #222; background: #fff; }
h2, h3, p, ul { margin: 0; padding: 0; }
button { border: 0; background: none; padding: 0; font: inherit; color: inherit; }
a { text-decoration: none; color: #003063; }
svg { display: block; flex: none; }

.top { position: relative; }
.brand { height: 78px; display: flex; justify-content: space-between; padding: 12px 24px 0; }
.dipas { margin-top: 11px; }
.d1, .d2 { font: 700 21px Roboto, sans-serif; fill: #003063; }
.d2 { fill: #3a8bcf; }
.d3 { font: 700 24px Lato, sans-serif; fill: #003063; }
.bar { height: 26px; background: #003063; }
.ribbon { position: absolute; left: 0; top: 67px; width: 202px; height: 23px; background: #e10019; clip-path: polygon(0 0, 100% 0, 187px 100%, 0 100%); }

.scroller { flex: 1; display: flex; background: #ebeff5; }
.board { flex: 1; min-width: 0; display: grid; grid-template-columns: 933fr 303fr 302fr 302fr; gap: 13px; padding: 17px 14px 3px 11px; }
.rail { width: 15px; display: flex; flex-direction: column; align-items: center; background: #f1f1f1; padding: 8px 2px 6px 0; }
.rail b { flex: 1; width: 13px; background: #c1c1c1; margin: 6px 0 24px; }
.rail i { border: 4px solid transparent; }
.rail .up { border-top: 0; border-bottom-color: #a3a3a3; }
.rail .down { border-bottom: 0; border-top-color: #444; }

.card { background: #fff; border-radius: 16px 16px 0 0; display: flex; flex-direction: column; min-width: 0; }
.head { height: 35px; flex: none; display: flex; align-items: center; gap: 8px; background: #003063; color: #fff; border-radius: 16px 16px 0 0; padding: 0 14px 0 9px; }
.card + .card .head { height: 34px; }
.head h2 { flex: 1; font-size: 14px; font-weight: 700; line-height: 20px; }
.icon { display: flex; align-items: center; }
.stack { display: flex; flex-direction: column; gap: 23px; min-width: 0; }
.grow { flex: 1; }
.even { flex: 1 1 0; }
.info { margin-right: 2px; }
.head.split { gap: 0; padding-right: 9px; }
.mode { align-self: stretch; width: 26px; justify-content: center; }
.mode.on { background: #ccd4e0; color: #003063; }

.legend { height: 22px; margin: 9px 9px 0; padding: 0 0 2px 14px; background: #ebeff5; display: flex; align-items: center; gap: 16px; font-size: 14px; font-weight: 300; }
.legend label { display: flex; align-items: center; }
.legend label svg { margin: 0 3px 0 7px; }
.legend label .star { margin: 0 0 0 5px; }
.legend input { appearance: none; width: 14px; height: 14px; margin: 3px 0 0; border: 1px solid #003063; background: #fff; display: grid; place-items: center; }
.legend input:checked::after { content: ""; width: 4px; height: 8px; border: solid #003063; border-width: 0 1px 1px 0; transform: rotate(42deg); margin-bottom: 2px; }

.map { position: relative; flex: 1; margin: 0 9px; min-height: 600px; overflow: hidden; }
.tiles { position: absolute; width: 100%; height: 100%; }
.place { font: 700 11px "Liberation Sans", sans-serif; fill: #5c1f9c; stroke: #fff; stroke-width: 2px; paint-order: stroke; }
.wood { font: 11px "Liberation Sans", sans-serif; fill: #5a9c7c; }
.region { font: 16px "Liberation Sans", sans-serif; fill: #3f8a63; letter-spacing: 4px; }
.river { font: 11px "Liberation Sans", sans-serif; fill: #2f86c6; }
.shield text { font: 700 9px "Liberation Sans", sans-serif; text-anchor: middle; fill: #fff; }
.shield.y rect { fill: #f5efa0; stroke: #777759; }
.shield.y text { fill: #333; }
.shield.b rect { fill: #1a70bd; }
.shield.g rect { fill: #0f9245; }

.popup { position: absolute; top: 18px; right: 17px; width: 557px; background: #fff; border: 1px solid #003063; border-radius: 14px; box-shadow: 0 4px 12px rgba(0, 0, 0, .35); font-family: "Liberation Sans", Arial, sans-serif; color: #444; padding-bottom: 11px; }
.popup-head { height: 55px; display: flex; justify-content: space-between; padding: 18px 16px 0 24px; font-size: 14px; border-bottom: 1px solid #ddd; }
.popup-head button { align-self: flex-start; margin-top: -3px; }
.popup-body { padding: 10px 6px 0 22px; }
.status { display: flex; align-items: center; gap: 9px; }
.tag { display: flex; align-items: center; gap: 5px; height: 28px; padding: 0 5px 0 9px; background: #003063; color: #fff; font: 700 11px/14px Roboto, sans-serif; }
.small { font-size: 11px; }
.popup h3 { font-size: 14px; line-height: 20px; color: #003063; margin-top: 10px; }
.topic { margin: 3px 0 2px; }
.meta { display: flex; flex-direction: column; gap: 5px; margin-top: 23px; }
.meta a { text-decoration: underline; }

.map-foot { height: 44px; flex: none; display: flex; align-items: flex-start; padding: 0 16px 0 18px; font: 9px/19px Inter, sans-serif; white-space: nowrap; }
.map-foot i { width: 1px; height: 10px; background: #555; margin: 5px 11px 0 17px; }
.map-foot a { margin-left: 7px; }
.scale { margin-left: auto; }
.ruler { width: 68px; height: 17px; margin-left: 18px; text-align: center; border: solid #333; border-width: 0 1px 1px; }
.map-foot .lang { margin-left: 9px; font: 10px/18px Roboto, sans-serif; }

.sort { display: flex; align-items: center; gap: 7px; font-size: 9px; font-weight: 500; }
.sort i { border: 3px solid transparent; border-top-color: #fff; border-bottom: 0; }
.list { display: flex; height: 283px; margin: 9px 9px 29px; overflow: hidden; background: #fff; }
.list ul { flex: 1; min-width: 0; list-style: none; margin-right: 2px; }
.list li { height: 23px; padding: 0 11px 0 2px; display: flex; align-items: center; justify-content: space-between; }
.list li:nth-child(odd) { background: #ebeff5; height: 22px; padding-bottom: 1px; }
.list li a { flex: 1; min-width: 0; color: #1a66ae; overflow: hidden; text-overflow: ellipsis; white-space: nowrap; }
.small-rail { padding-top: 7px; }
.small-rail b { flex: none; height: 54px; margin: 6px 0 auto; }

.reports { display: flex; flex-direction: column; gap: 5px; padding: 9px 9px 17px; }
.reports a { height: 35px; display: flex; align-items: center; justify-content: space-between; padding: 3px 13px 0 16px; font-weight: 500; }
.tone0 { background: #9badc2; }
.tone1 { background: #ccd4e0; }
.tone2 { background: #ebeff5; }

.dates { flex: 1; display: flex; flex-direction: column; padding: 10px 9px; }
.date-row { display: flex; align-items: center; gap: 4px; padding: 0 4px 0 2px; }
.date { width: 72px; flex: none; height: 18px; border-radius: 4px; background: #003063; color: #fff; font-size: 10px; line-height: 18px; font-weight: 500; text-align: center; }
.pale { background: #9badc2; color: #333; font-weight: 400; }
.ellip { flex: 1; min-width: 0; overflow: hidden; text-overflow: ellipsis; white-space: nowrap; }
.strong { color: #003063; font-weight: 500; }
.chev { margin-left: 9px; }
.second { padding-right: 24px; }
.area { display: flex; align-items: center; gap: 4px; color: #a020a6; font-size: 10px; font-weight: 300; }
.second .area { width: 72px; flex: none; }
.area span { overflow: hidden; text-overflow: ellipsis; white-space: nowrap; }
.dates p { font-weight: 300; padding: 2px 20px 0 2px; }
.more { font-weight: 600; margin-left: 4px; display: inline-block; }
.later { margin-top: auto; display: flex; flex-direction: column; gap: 3px; }
.boxed { height: 26px; border: 1px solid #9badc2; padding-bottom: 2px; }
.date-row > .ellip { font-weight: 300; }
.date-row > .strong { font-weight: 500; }

.post { flex: 1; display: flex; flex-direction: column; padding: 0 8px 19px; }
.tabs { display: flex; justify-content: center; gap: 22px; margin: 22px 0 15px; color: #003063; font-weight: 300; }
.tabs .on { font-weight: 500; text-decoration: underline; }
.post > .title { flex: none; margin: 3px -4px 0 0; }
.themes { font-size: 10px; line-height: 12px; color: #8a2f6d; font-weight: 300; margin-top: 1px; }
.post p { font-weight: 300; margin-right: -3px; }
.post > .area { padding-left: 1px; }
.count { margin-top: 11px; }
.cta { align-self: center; margin-top: auto; height: 21px; padding: 0 8px; background: #e10019; color: #fff; }
.slider { display: flex; align-items: center; gap: 4px; margin-top: 31px; }
.prev, .next { flex: 1; display: flex; align-items: center; }
.prev::after, .next::before { content: ""; flex: 1; height: 1px; background: #003063; }
.prev { margin-right: 3px; }
.next { margin-left: 5px; }
.prev::after { margin-left: -7px; }
.next::before { margin-right: -7px; }
.dot { width: 9px; height: 9px; border: 1px solid #003063; border-radius: 50%; margin-right: 1px; }
.dot.on { width: 13px; height: 13px; background: #003063; border: 2px solid #1a66ae; margin-right: -2px; }
.low { margin-bottom: 21px; }
.total { text-align: center; font-size: 14px; line-height: 20px; color: #003063; font-weight: 500; }
.chart { width: 100%; height: auto; }
.chart text { font: 11px "Liberation Sans", Arial, sans-serif; fill: #666; }
.post .bars { width: auto; margin: 15px -8px 0; }

.stat-body { padding: 9px 9px 0; }
.sum { height: 32px; line-height: 31px; text-align: center; background: #ebeff5; color: #003063; font-size: 14px; font-weight: 500; }
.stat-body h3 { font-size: 13px; line-height: 19px; font-weight: 500; color: #003063; }
.sum + h3 { margin: 13px 0 7px; }
.spaced { margin-top: 6px; }
hr { width: 214px; height: 1px; border: 0; background: #003063; margin: 16px auto 18px; }
.keys { list-style: none; display: flex; flex-wrap: wrap; column-gap: 9px; padding: 4px 8px 0 10px; font: 11px/20px "Liberation Sans", Arial, sans-serif; color: #666; }
.keys li { display: flex; align-items: center; gap: 6px; }
.keys i { width: 34px; height: 9px; }

footer { height: 23px; display: flex; gap: 19px; padding: 0 24px; text-transform: uppercase; font-size: 14px; font-weight: 600; line-height: 20px; }
footer a { color: #005ca9; }
</style>
